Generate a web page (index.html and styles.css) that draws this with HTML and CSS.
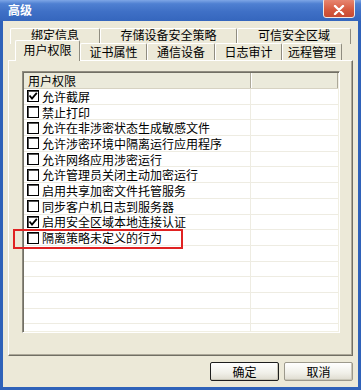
FILE: index.html
```html
<!DOCTYPE html>
<html lang="zh-CN">

<head>
    <meta charset="UTF-8">
    <meta name="viewport" content="width=device-width, initial-scale=1.0">
    <title>高级</title>
    <link rel="stylesheet" href="styles.css">
</head>

<body>

    <div class="window">
        <div class="titlebar">
            <div class="caption">高级</div>
            <div class="close">
                <svg width="12" height="10" viewBox="0 0 12 10">
                    <path d="M2 1 L10 9 M10 1 L2 9" stroke="#fff" stroke-width="2.4" stroke-linecap="round" />
                </svg>
            </div>
        </div>

        <div class="frame">
            <!-- abas em duas linhas -->
            <div class="tabs">
                <div class="tabrow back">
                    <div class="tab" style="width: 90px;">绑定信息</div>
                    <div class="tab" style="width: 137px;">存储设备安全策略</div>
                    <div class="tab" style="width: 114px;">可信安全区域</div>
                </div>
                <div class="tabrow front">
                    <div class="tab active" style="width: 65px;">用户权限</div>
                    <div class="tab" style="width: 67px;">证书属性</div>
                    <div class="tab" style="width: 68px;">通信设备</div>
                    <div class="tab" style="width: 67px;">日志审计</div>
                    <div class="tab" style="width: 60px;">远程管理</div>
                </div>
            </div>

            <div class="panel">
                <div class="list">
                    <div class="list-head">
                        <div class="col1">用户权限</div>
                        <div class="col2"></div>
                    </div>
                    <div id="rows"></div>
                </div>
            </div>

            <div class="buttons">
                <button class="btn default">确定</button>
                <button class="btn">取消</button>
            </div>
        </div>

        <div class="highlight"></div>
    </div>

    <script>
        const permissoes = [
            { texto: '允许截屏', marcado: true },
            { texto: '禁止打印', marcado: false },
            { texto: '允许在非涉密状态生成敏感文件', marcado: false },
            { texto: '允许涉密环境中隔离运行应用程序', marcado: false },
            { texto: '允许网络应用涉密运行', marcado: false },
            { texto: '允许管理员关闭主动加密运行', marcado: false },
            { texto: '启用共享加密文件托管服务', marcado: false },
            { texto: '同步客户机日志到服务器', marcado: false },
            { texto: '启用安全区域本地连接认证', marcado: true },
            { texto: '隔离策略未定义的行为', marcado: false }
        ];

        const rows = document.getElementById('rows');
        const tick = '<svg width="10" height="10" viewBox="0 0 10 10"><path d="M1.5 4.5 L4 7.5 L8.8 1.8" fill="none" stroke="#000" stroke-width="1.8"/></svg>';

        for (let i = 0; i < 16; i++) {
            const item = permissoes[i];
            const row = document.createElement('div');
            row.className = 'row';
            const col1 = document.createElement('div');
            col1.className = 'col1';
            if (item) {
                col1.innerHTML = `<span class="check">${item.marcado ? tick : ''}</span><span>${item.texto}</span>`;
            }
            const col2 = document.createElement('div');
            col2.className = 'col2';
            row.appendChild(col1);
            row.appendChild(col2);
            rows.appendChild(row);
        }
    </script>
</body>

</html>
```

FILE: styles.css
```css
body {
    margin: 0;
    font-family: "Noto Sans CJK SC", "DejaVu Sans", sans-serif;
    font-size: 12px;
    background-color: #fff;
}

.window {
    position: relative;
    width: 361px;
    height: 390px;
    display: flex;
    flex-direction: column;
    overflow: hidden;
}

.titlebar {
    height: 21px;
    flex-shrink: 0;
    display: flex;
    align-items: center;
    padding: 0 6px 0 8px;
    overflow: hidden;
    background: linear-gradient(to bottom, #7ea6e6 0%, #4f80d2 18%, #3f70c6 55%, #3566bd 100%);
}

.caption {
    flex: 1;
    color: #fff;
    font-weight: bold;
    font-size: 12px;
    line-height: 14px;
    margin-top: -1px;
}

.close {
    box-sizing: border-box;
    width: 32px;
    height: 20px;
    margin-top: -5px;
    padding-top: 3px;
    border: 1px solid #f2e8e4;
    border-radius: 3px;
    background: linear-gradient(to bottom, #e98a75, #d65a3f 60%, #c84a32);
    display: flex;
    align-items: center;
    justify-content: center;
}

.frame {
    flex: 1;
    display: flex;
    flex-direction: column;
    background-color: #ece9d8;
    border: 3px solid #2f62b9;
    border-top: none;
    padding: 7px 5px 0 5px;
}

.tabrow {
    display: flex;
    height: 16px;
}

.tabrow.back {
    margin-left: 2px;
}

.tabrow.back .tab {
    line-height: 12px;
}

.tabrow.front {
    position: relative;
    height: 17px;
    margin-top: -1px;
    margin-left: 7px;
}

.tab {
    box-sizing: border-box;
    height: 100%;
    text-align: center;
    line-height: 15px;
    color: #000;
    background-color: #ece9d8;
    border-top: 1px solid #fff;
    border-left: 1px solid #fff;
    border-right: 1px solid #8f8c80;
    border-radius: 2px 2px 0 0;
    white-space: nowrap;
}

.tab.active {
    position: relative;
    z-index: 2;
    height: 21px;
    margin-top: -3px;
    margin-bottom: -1px;
    line-height: 18px;
}

.panel {
    position: relative;
    z-index: 1;
    box-sizing: border-box;
    height: 296px;
    padding: 10px 12px 22px 13px;
    border: 1px solid;
    border-color: #fff #716f64 #716f64 #fff;
    box-shadow: inset -1px -1px 0 #aca899;
    display: flex;
}

.list {
    flex: 1;
    background-color: #fff;
    border: 1px solid;
    border-color: #8f8c80 #fff #fff #8f8c80;
    box-shadow: inset 1px 1px 0 #716f64, inset -1px -1px 0 #f1efe2;
    padding: 1px;
    overflow: hidden;
}

.list-head {
    display: flex;
    height: 15px;
    line-height: 15px;
    background-color: #ebeadb;
    border-bottom: 1px solid #d6d2c2;
}

.list-head .col1 {
    padding-left: 4px;
    border-right: 1px solid #aca899;
    box-shadow: 1px 0 0 #fff;
}

.list-head .col2 {
    border-right: 1px solid #aca899;
}

.col1 {
    box-sizing: border-box;
    width: 228px;
    display: flex;
    align-items: center;
    white-space: nowrap;
}

.col2 {
    box-sizing: border-box;
    width: 87px;
}

.row {
    display: flex;
    height: 15.7px;
    box-sizing: border-box;
    border-bottom: 1px solid #eeece2;
}

.row .col1 {
    padding-left: 3px;
    border-right: 1px solid #eeece2;
    line-height: 15px;
}

.check {
    box-sizing: border-box;
    width: 12px;
    height: 12px;
    margin-right: 3px;
    border: 1px solid #000;
    box-shadow: inset 1px 1px 0 #555;
    display: flex;
    align-items: center;
    justify-content: center;
    flex-shrink: 0;
}

.buttons {
    display: flex;
    justify-content: flex-end;
    gap: 5px;
    margin-top: 6px;
}

.btn {
    box-sizing: border-box;
    width: 69px;
    height: 19px;
    padding: 0;
    font-family: "Noto Sans CJK SC", "DejaVu Sans", sans-serif;
    font-size: 12px;
    line-height: 15px;
    color: #000;
    background: linear-gradient(to bottom, #fff, #f0efe8 60%, #dedbcf);
    border: 1px solid #9c998c;
    border-radius: 2px;
    box-shadow: inset -1px -1px 0 #c9c6b8;
}

.btn.default {
    border: 1px solid #1e1e1e;
}

/* destaque vermelho sobre a ultima linha */
.highlight {
    position: absolute;
    z-index: 5;
    left: 13px;
    top: 229px;
    width: 170px;
    height: 20px;
    box-sizing: border-box;
    border: 2px solid #e02222;
}
```
